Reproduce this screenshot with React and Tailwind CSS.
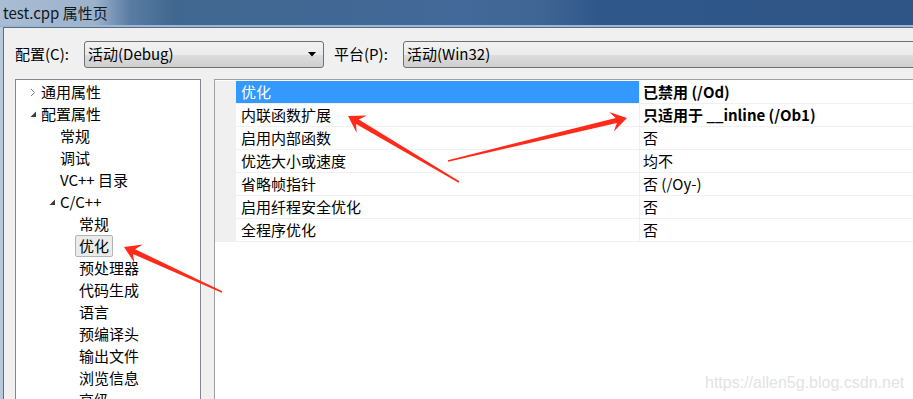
import React from "react";

const FONT = { fontFamily: '"Noto Sans CJK SC", "Noto Sans", sans-serif' };

const treeItems = [
  { t: "通用属性", lvl: 0, icon: "collapsed" },
  { t: "配置属性", lvl: 0, icon: "expanded" },
  { t: "常规", lvl: 1 },
  { t: "调试", lvl: 1 },
  { t: "VC++ 目录", lvl: 1 },
  { t: "C/C++", lvl: 1, icon: "expanded" },
  { t: "常规", lvl: 2 },
  { t: "优化", lvl: 2, sel: true },
  { t: "预处理器", lvl: 2 },
  { t: "代码生成", lvl: 2 },
  { t: "语言", lvl: 2 },
  { t: "预编译头", lvl: 2 },
  { t: "输出文件", lvl: 2 },
  { t: "浏览信息", lvl: 2 },
  { t: "高级", lvl: 2 },
];

const rows = [
  { n: "优化", v: "已禁用 (/Od)", bold: true, sel: true },
  { n: "内联函数扩展", v: "只适用于 __inline (/Ob1)", bold: true },
  { n: "启用内部函数", v: "否" },
  { n: "优选大小或速度", v: "均不" },
  { n: "省略帧指针", v: "否 (/Oy-)" },
  { n: "启用纤程安全优化", v: "否" },
  { n: "全程序优化", v: "否" },
];

const lvlPad = ["pl-[9px]", "pl-[28px]", "pl-[47px]"];

function TreeIcon({ kind }) {
  if (kind === "collapsed") {
    return (
      <svg width="6" height="9" viewBox="0 0 6 9">
        <polyline points="1,1 4.5,4.5 1,8" fill="none" stroke="#7a7a7a" strokeWidth="1" />
      </svg>
    );
  }
  if (kind === "expanded") {
    return (
      <svg width="7" height="7" viewBox="0 0 7 7">
        <polygon points="6,0.5 6,6 0.5,6" fill="#3c3c3c" />
      </svg>
    );
  }
  return null;
}

function arrowPts(tx, ty, px, py) {
  const L = 16, W = 10, neck = 11, w0 = 0.8, w1 = 2.6;
  const dx = px - tx, dy = py - ty;
  const len = Math.hypot(dx, dy);
  const ux = dx / len, uy = dy / len;
  const nx = -uy, ny = ux;
  const p = (d, s) => `${(px - ux * d + nx * s).toFixed(1)},${(py - uy * d + ny * s).toFixed(1)}`;
  return [
    `${(tx + nx * w0).toFixed(1)},${(ty + ny * w0).toFixed(1)}`,
    p(neck, w1),
    p(L, W),
    `${px},${py}`,
    p(L, -W),
    p(neck, -w1),
    `${(tx - nx * w0).toFixed(1)},${(ty - ny * w0).toFixed(1)}`,
  ].join(" ");
}

function Dropdown({ text, arrow, className }) {
  return (
    <div
      className={`h-[27px] shrink-0 rounded-[3px] border border-[#707070] flex items-center pl-[3px] pr-[6px] bg-[linear-gradient(to_bottom,#f2f2f2_0%,#ebebeb_50%,#dddddd_51%,#cfcfcf_100%)] ${className}`}
    >
      <span className="text-[15px] text-black flex-1 whitespace-nowrap">{text}</span>
      {arrow && (
        <svg width="8" height="5" viewBox="0 0 8 5" className="mr-[1px]">
          <polygon points="0,0 8,0 4,4.5" fill="#000" />
        </svg>
      )}
    </div>
  );
}

export default function App() {
  return (
    <div className="w-[913px] h-[399px] overflow-hidden relative bg-[#f0f0f0] flex flex-col" style={FONT}>
      {/* Title bar */}
      <div className="h-[27px] shrink-0 flex items-center pl-[3px] border-b-2 border-[#9bb6d6] bg-[linear-gradient(to_right,#a9bdd4_0px,#9cb2cb_95px,#5a7ca3_130px,#40678f_175px,#43699a_470px,#3f6594_540px,#30578a_600px,#2e5585_100%)]">
        <span className="text-[15px] text-[#101820] leading-none">test.cpp 属性页</span>
      </div>

      {/* Body */}
      <div className="flex-1 flex min-h-0">
        <div className="w-[3px] shrink-0 bg-[#b9c9da]" />
        <div className="flex-1 border-l border-t border-[#5e6b78] flex flex-col min-w-0 overflow-hidden">
          {/* Config row */}
          <div className="flex items-center h-[27px] mt-[13px] pl-[11px] shrink-0">
            <span className="w-[69px] shrink-0 text-[15px] text-black whitespace-nowrap">配置(C):</span>
            <Dropdown text="活动(Debug)" arrow className="w-[240px]" />
            <span className="w-[79px] shrink-0 pl-[10px] text-[15px] text-black whitespace-nowrap">平台(P):</span>
            <Dropdown text="活动(Win32)" className="w-[560px]" />
          </div>

          {/* Panels */}
          <div className="flex mt-[11px] pl-[11px] flex-1 min-h-0 gap-[13px]">
            {/* Tree */}
            <div className="w-[186px] shrink-0 h-[400px] bg-white border border-[#828790] pt-[1px]">
              {treeItems.map((it, i) => (
                <div key={i} className={`h-[22px] flex items-center ${lvlPad[it.lvl]}`}>
                  <span className="w-[16px] h-[22px] flex items-center justify-center shrink-0">
                    <TreeIcon kind={it.icon} />
                  </span>
                  {it.sel ? (
                    <span className="h-[22px] -ml-[4px] px-[3px] flex items-center border border-[#b4b4b4] rounded-[2px] bg-[#ebebeb] text-[15px] text-black whitespace-nowrap">
                      {it.t}
                    </span>
                  ) : (
                    <span className="text-[15px] text-black whitespace-nowrap">{it.t}</span>
                  )}
                </div>
              ))}
            </div>

            {/* Property grid */}
            <div className="w-[760px] shrink-0 h-[400px] bg-white border border-[#a0a0a0] pt-[1px]">
              {rows.map((r, i) => (
                <div key={i} className="h-[23px] flex">
                  <div className="w-[21px] shrink-0 bg-[#f0f0f0]" />
                  <div
                    className={`w-[403px] shrink-0 border-b border-[#f0f0f0] flex items-center pl-[5px] text-[15px] whitespace-nowrap ${
                      r.sel ? "bg-[#3399ff] text-white" : "text-black"
                    }`}
                  >
                    {r.n}
                  </div>
                  <div className="w-[1px] shrink-0 bg-[#f0f0f0]" />
                  <div
                    className={`flex-1 border-b border-[#f0f0f0] flex items-center pl-[3px] text-[15px] text-black whitespace-nowrap ${
                      r.bold ? "font-bold" : ""
                    }`}
                  >
                    {r.v}
                  </div>
                </div>
              ))}
            </div>
          </div>
        </div>
      </div>

      {/* Watermark */}
      <div
        className="absolute left-[705px] top-[371px] text-[16px] text-[#e3e3e3] whitespace-nowrap"
        style={{ fontFamily: '"Liberation Sans", Arial, sans-serif' }}
      >
        https://allen5g.blog.csdn.net
      </div>

      {/* Red arrows overlay */}
      <svg className="absolute left-0 top-0 pointer-events-none" width="913" height="399">
        <polygon points={arrowPts(222, 292, 124, 247)} fill="#ff2a1a" />
        <polygon points={arrowPts(459, 182, 348, 116)} fill="#ff2a1a" />
        <polygon points={arrowPts(448, 161, 627, 118)} fill="#ff2a1a" />
      </svg>
    </div>
  );
}
